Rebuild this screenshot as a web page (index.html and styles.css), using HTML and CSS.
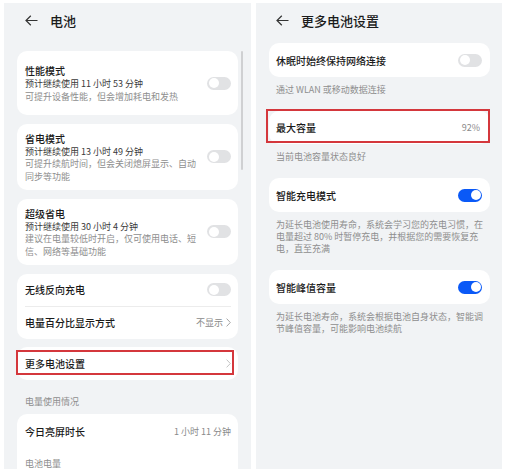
FILE: index.html
```html
<!DOCTYPE html>
<html>
<head>
  <meta charset="utf-8">
  <link rel="stylesheet" href="styles.css">
</head>
<body>
  <div class="screens">
    <section class="phone phone--battery">
      <header class="topbar">
        <svg class="topbar__back" width="13" height="11" viewBox="0 0 13 11">
          <path d="M12.5 5.5H1M5.8 0.8L1 5.5l4.8 4.7" />
        </svg>
        <h1 class="topbar__title">电池</h1>
      </header>
      <div class="scrollbar"></div>

      <div class="list">
        <div class="card">
          <div class="option option--tall">
            <div class="option__text">
              <div class="option__title">性能模式</div>
              <div class="option__info">预计继续使用 11 小时 53 分钟</div>
              <div class="option__hint">可提升设备性能，但会增加耗电和发热</div>
            </div>
            <span class="switch"></span>
          </div>
        </div>

        <div class="card">
          <div class="option option--tall">
            <div class="option__text">
              <div class="option__title">省电模式</div>
              <div class="option__info">预计继续使用 13 小时 49 分钟</div>
              <div class="option__hint">可提升续航时间，但会关闭熄屏显示、自动同步等功能</div>
            </div>
            <span class="switch"></span>
          </div>
        </div>

        <div class="card">
          <div class="option option--tall">
            <div class="option__text">
              <div class="option__title">超级省电</div>
              <div class="option__info">预计继续使用 30 小时 4 分钟</div>
              <div class="option__hint">建议在电量较低时开启，仅可使用电话、短信、网络等基础功能</div>
            </div>
            <span class="switch"></span>
          </div>
        </div>

        <div class="card">
          <div class="row">
            <span class="row__title">无线反向充电</span>
            <span class="switch"></span>
          </div>
          <div class="divider"></div>
          <div class="row">
            <span class="row__title">电量百分比显示方式</span>
            <span class="row__value">不显示
              <svg class="chevron" width="5" height="9" viewBox="0 0 5 9"><path d="M0.6 0.6L4.3 4.5L0.6 8.4" /></svg>
            </span>
          </div>
        </div>

        <div class="card card--marked-left">
          <div class="row row--33">
            <span class="row__title">更多电池设置</span>
            <svg class="chevron chevron--light" width="5" height="9" viewBox="0 0 5 9"><path d="M0.6 0.6L4.3 4.5L0.6 8.4" /></svg>
          </div>
        </div>

        <div class="section-label">电量使用情况</div>

        <div class="card">
          <div class="row row--34">
            <span class="row__title">今日亮屏时长</span>
            <span class="row__value">1 小时 11 分钟</span>
          </div>
          <div class="card__caption">电池电量</div>
        </div>
      </div>
    </section>

    <section class="phone phone--more">
      <header class="topbar topbar--more">
        <svg class="topbar__back" width="13" height="11" viewBox="0 0 13 11">
          <path d="M12.5 5.5H1M5.8 0.8L1 5.5l4.8 4.7" />
        </svg>
        <h1 class="topbar__title">更多电池设置</h1>
      </header>

      <div class="list list--more">
        <div class="card">
          <div class="row row--34 row--right">
            <span class="row__title">休眠时始终保持网络连接</span>
            <span class="switch"></span>
          </div>
        </div>
        <p class="note">通过 WLAN 或移动数据连接</p>

        <div class="card card--marked-right">
          <div class="row row--33 row--right row--value">
            <span class="row__title">最大容量</span>
            <span class="row__value">92%</span>
          </div>
        </div>
        <p class="note">当前电池容量状态良好</p>

        <div class="card">
          <div class="row row--34 row--right">
            <span class="row__title">智能充电模式</span>
            <span class="switch switch--on"></span>
          </div>
        </div>
        <p class="note">为延长电池使用寿命，系统会学习您的充电习惯，在电量超过 80% 时暂停充电，并根据您的需要恢复充电，直至充满</p>

        <div class="card">
          <div class="row row--34 row--right">
            <span class="row__title">智能峰值容量</span>
            <span class="switch switch--on"></span>
          </div>
        </div>
        <p class="note">为延长电池寿命，系统会根据电池自身状态，智能调节峰值容量，可能影响电池续航</p>
      </div>
    </section>
  </div>
</body>
</html>
```

FILE: styles.css
```css
body {
  margin: 0;
  background-color: #ffffff;
  font-family: "Noto Sans CJK SC", "Noto Sans", sans-serif;
  color: #1a1a1a;
}

.screens {
  display: flex;
  gap: 5px;
  box-sizing: border-box;
  height: 469px;
  padding: 3px 4px 0;
  overflow: hidden;
}

.phone {
  position: relative;
  box-sizing: border-box;
  overflow: hidden;
  background-color: #f1f3f5;
}

.phone--battery {
  width: 247px;
  padding: 0 13px;
}

.phone--more {
  width: 246px;
  padding: 0 12px 0 13px;
}

.topbar {
  display: flex;
  align-items: center;
  gap: 12px;
  height: 34px;
  padding-left: 8px;
}

.topbar--more {
  padding-left: 7px;
}

.topbar__back {
  flex: none;
  fill: none;
  stroke: #333333;
  stroke-width: 1.2;
}

.topbar__title {
  margin: 0;
  font-size: 13px;
  font-weight: 500;
  color: #1b1b1b;
}

.scrollbar {
  position: absolute;
  top: 48px;
  left: 237px;
  width: 2px;
  height: 119px;
  border-radius: 1px;
  background-color: #cfd0d2;
}

.list {
  padding-top: 14px;
}

.list--more {
  padding-top: 6px;
}

.card {
  position: relative;
  margin-bottom: 8.5px;
  border-radius: 10px;
  background-color: #ffffff;
}

.list--more .card {
  margin-bottom: 0;
}

.card--marked-left::after,
.card--marked-right::after {
  content: "";
  position: absolute;
  border: 2px solid #d4373c;
}

.card--marked-left::after {
  inset: 3px 4px 5px -1px;
}

.card--marked-right::after {
  inset: -2px 0 1px -3px;
}

.option {
  display: flex;
  align-items: center;
  justify-content: space-between;
  padding: 7px 7px 7px 8px;
}

.option--tall {
  min-height: 50px;
}

.option__text {
  width: 172px;
}

.option__title {
  font-size: 10px;
  line-height: 15px;
  font-weight: 500;
  color: #1a1a1a;
}

.option__info,
.option__hint {
  font-size: 9px;
  line-height: 12.5px;
}

.option__info {
  color: #3a3a3a;
}

.option__hint {
  color: #8e8e8e;
}

.row {
  display: flex;
  align-items: center;
  justify-content: space-between;
  height: 32px;
  padding: 0 7px 0 8px;
}

.row--33 {
  height: 33px;
}

.row--34 {
  height: 34px;
}

.row--right {
  padding: 0 8px 0 7px;
}

.row--value {
  padding-right: 10px;
}

.row__title {
  font-size: 10px;
  font-weight: 500;
  color: #1a1a1a;
}

.row__value {
  display: flex;
  align-items: center;
  gap: 3px;
  font-size: 9px;
  color: #8a8a8a;
}

.divider {
  height: 1px;
  margin: 0 7px 0 8px;
  background-color: #ececec;
}

.chevron {
  fill: none;
  stroke: #a5a5a5;
  stroke-width: 1;
}

.chevron--light {
  stroke: #c4c4c4;
}

.section-label {
  margin-top: -8.5px;
  padding: 16px 8px 6px;
  font-size: 9px;
  line-height: 12px;
  color: #8e8e8e;
}

.card__caption {
  padding: 10px 8px 10px;
  font-size: 9px;
  line-height: 12px;
  color: #8e8e8e;
}

.note {
  margin: 0;
  padding: 7px 6px 15px 7px;
  font-size: 9px;
  line-height: 12px;
  color: #8e8e8e;
}

.switch {
  position: relative;
  flex: none;
  width: 24px;
  height: 13px;
  border-radius: 7px;
  background-color: #e1e2e4;
}

.switch::after {
  content: "";
  position: absolute;
  top: 1.5px;
  left: 1.5px;
  width: 10px;
  height: 10px;
  border-radius: 50%;
  background-color: #ffffff;
}

.switch--on {
  background-color: #0a59f7;
}

.switch--on::after {
  left: auto;
  right: 1.5px;
}
```
